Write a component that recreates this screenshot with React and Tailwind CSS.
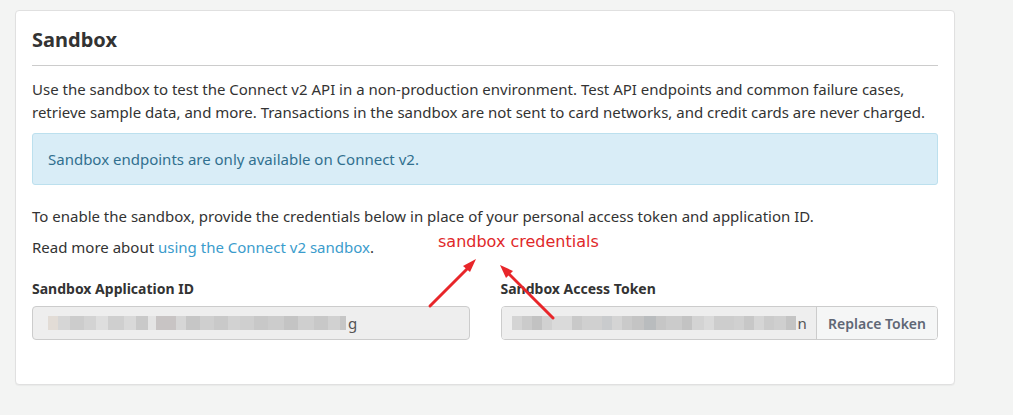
import React from "react";

const appIdBlur = [
  "w-[10px] bg-[#e2dcd6]", "w-[12px] bg-[#d6d6d6]", "w-[14px] bg-[#cccccc]", "w-[12px] bg-[#d3d3d3]",
  "w-[12px] bg-[#dedede]", "w-[16px] bg-[#cfcfcf]", "w-[12px] bg-[#d9d9d9]", "w-[12px] bg-[#c9c9c9]",
  "w-[8px] bg-[#e4e4e4]", "w-[20px] bg-[#c8c4c4]", "w-[10px] bg-[#d6d6d6]", "w-[14px] bg-[#c6c6c6]",
  "w-[14px] bg-[#cfcfcf]", "w-[14px] bg-[#c9c9c9]", "w-[12px] bg-[#d2d2d2]", "w-[14px] bg-[#cfcfcf]",
  "w-[14px] bg-[#c8c8c8]", "w-[16px] bg-[#cccccc]", "w-[14px] bg-[#c4c4c4]", "w-[16px] bg-[#cfcfcf]",
  "w-[14px] bg-[#c8c8c8]", "w-[12px] bg-[#d1d1d1]", "w-[6px] bg-[#c6c6c6]",
];

const tokenBlur = [
  "w-[10px] bg-[#d4d4d4]", "w-[10px] bg-[#cbcbcb]", "w-[10px] bg-[#c2c2c2]", "w-[10px] bg-[#d1d1d1]",
  "w-[20px] bg-[#dadada]", "w-[10px] bg-[#c9c9c9]", "w-[20px] bg-[#d0d0d0]", "w-[10px] bg-[#c9cbcd]",
  "w-[10px] bg-[#d4d4d4]", "w-[10px] bg-[#cacaca]", "w-[12px] bg-[#c4c4c4]", "w-[12px] bg-[#b9bcbe]",
  "w-[10px] bg-[#c6c6c6]", "w-[16px] bg-[#cbcbcb]", "w-[10px] bg-[#c3c3c3]", "w-[12px] bg-[#d3d3d3]",
  "w-[10px] bg-[#dadada]", "w-[20px] bg-[#cdcdcd]", "w-[10px] bg-[#d0d0d0]", "w-[10px] bg-[#c7c7c7]",
  "w-[10px] bg-[#d5d5d5]", "w-[10px] bg-[#cbcbcb]", "w-[12px] bg-[#cfcfcf]", "w-[10px] bg-[#c4c4c4]",
];

function Blurred({ blocks, tail }) {
  return (
    <div className="flex items-center whitespace-nowrap">
      <div className="flex h-[14px]">
        {blocks.map((c, i) => (
          <span key={i} className={"h-full shrink-0 " + c} />
        ))}
      </div>
      <span className="ml-[2px] text-[#555]">{tail}</span>
    </div>
  );
}

export default function App() {
  return (
    <div className="relative min-h-[415px] w-full bg-[#f3f4f3] pt-[10px] pl-[15px] font-['Noto_Sans',sans-serif] text-[15px] text-[#333]">
      <div className="w-[940px] rounded-[4px] border border-[#e0e0e0] bg-white px-4 pt-[16px] pb-[44px] shadow-[0_1px_1px_rgba(0,0,0,0.04)]">
        <h2 className="text-[20px] leading-[26px] font-bold text-[#333]">Sandbox</h2>
        <hr className="mt-[12px] border-t border-[#cccccc]" />
        <p className="mt-[12px] leading-[23px]">
          Use the sandbox to test the Connect v2 API in a non-production environment. Test API endpoints and common failure cases,
          retrieve sample data, and more. Transactions in the sandbox are not sent to card networks, and credit cards are never charged.
        </p>
        <div className="mt-[9px] rounded-[3px] border border-[#bce0ee] bg-[#d9edf7] px-[15px] py-[13px] leading-[24px] text-[#31708f]">
          Sandbox endpoints are only available on Connect v2.
        </div>
        <p className="mt-[20px] leading-[23px]">
          To enable the sandbox, provide the credentials below in place of your personal access token and application ID.
        </p>
        <p className="mt-[8px] leading-[23px]">
          Read more about <a className="text-[#3b9ccc]">using the Connect v2 sandbox</a>.
        </p>
        <div className="mt-[20px] grid grid-cols-2 gap-[31px]">
          <div>
            <label className="block text-[14px] leading-[20px] font-bold text-[#333]">Sandbox Application ID</label>
            <div className="mt-[7px] flex h-[34px] items-center rounded-[4px] border border-[#cccccc] bg-[#eeeeee] pl-[15px]">
              <Blurred blocks={appIdBlur} tail="g" />
            </div>
          </div>
          <div>
            <label className="block text-[14px] leading-[20px] font-bold text-[#333]">Sandbox Access Token</label>
            <div className="mt-[7px] flex h-[34px] overflow-hidden rounded-[4px] border border-[#cccccc]">
              <div className="flex min-w-0 flex-1 items-center overflow-hidden bg-[#eeeeee] pl-[10px]">
                <Blurred blocks={tokenBlur} tail="n" />
              </div>
              <button className="shrink-0 whitespace-nowrap border-l border-[#cccccc] bg-[#f5f6f6] px-[11px] text-[14px] font-semibold text-[#5f6775]">
                Replace Token
              </button>
            </div>
          </div>
        </div>
      </div>

      <span className="absolute left-[438px] top-[232px] font-['DejaVu_Sans',sans-serif] text-[16px] leading-[20px] text-[#e0282a]">
        sandbox credentials
      </span>
      <svg className="pointer-events-none absolute left-0 top-0" width="1013" height="415">
        <g stroke="#e8262a" strokeWidth="3" strokeLinecap="round" fill="none">
          <line x1="430" y1="306" x2="471" y2="265" />
          <line x1="553" y1="318" x2="506" y2="271" />
        </g>
        <polygon points="476,259 463,266 470,272" fill="#e8262a" />
        <polygon points="500,265 513,271 506,278" fill="#e8262a" />
      </svg>
    </div>
  );
}
